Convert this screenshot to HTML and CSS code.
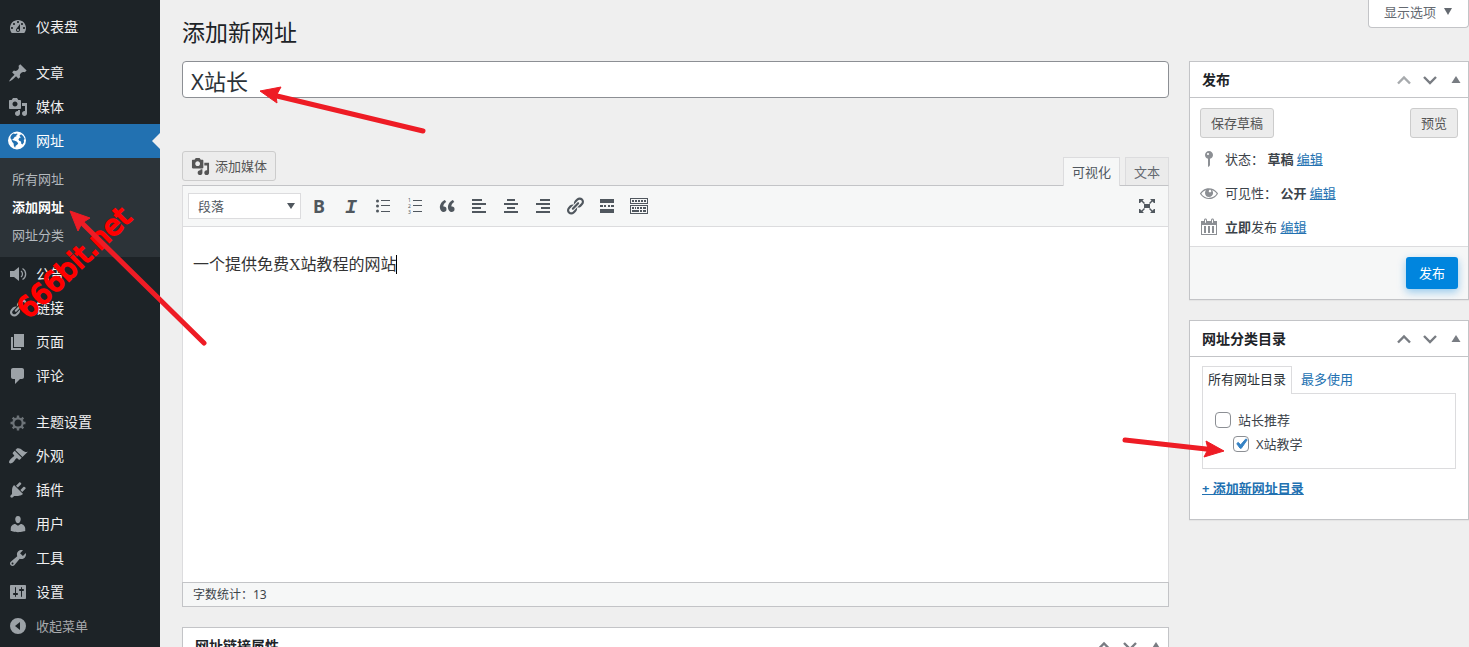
FILE: index.html
```html
<!DOCTYPE html>
<html lang="zh-CN">
<head>
    <meta charset="UTF-8">
    <meta name="viewport" content="width=device-width, initial-scale=1.0">
    <title>添加新网址</title>
    <link rel="stylesheet" href="styles.css">
</head>
<body>

    <!-- Shared icons -->
    <svg class="icon-defs" aria-hidden="true">
        <symbol id="i-media" viewBox="0 0 20 20"><path d="M13 11V4c0-.55-.45-1-1-1h-1.67L9 1H5L3.67 3H2c-.55 0-1 .45-1 1v7c0 .55.45 1 1 1h10c.55 0 1-.45 1-1zM7 4.5c1.38 0 2.5 1.12 2.5 2.5S8.38 9.5 7 9.5 4.5 8.38 4.5 7 5.62 4.5 7 4.5zM14 6h5v10.5c0 1.38-1.12 2.5-2.5 2.5S14 17.88 14 16.5s1.12-2.5 2.5-2.5c.17 0 .34.02.5.05V9h-3V6zm-4 8.05V13h2v3.5c0 1.38-1.12 2.5-2.5 2.5S7 17.88 7 16.5 8.12 14 9.5 14c.17 0 .34.02.5.05z"/></symbol>
        <symbol id="i-link" viewBox="0 0 20 20"><path d="M17.74 2.76c1.68 1.69 1.68 4.41 0 6.1l-1.53 1.52c-1.12 1.12-2.7 1.47-4.14 1.09l2.62-2.61.76-.77.76-.76c.84-.84.84-2.2 0-3.04-.84-.85-2.2-.85-3.04 0l-.77.76-3.38 3.38c-.37-1.44-.02-3.02 1.1-4.14l1.52-1.53c1.69-1.68 4.42-1.68 6.1 0zM8.59 13.43l5.34-5.34c.42-.42.42-1.1 0-1.52-.44-.43-1.13-.39-1.53 0l-5.33 5.34c-.42.42-.42 1.1 0 1.52.44.43 1.13.39 1.52 0zm-.76 2.29l4.14-4.15c.38 1.44.03 3.02-1.09 4.14l-1.52 1.53c-1.69 1.68-4.41 1.68-6.1 0-1.68-1.68-1.68-4.42 0-6.1l1.53-1.52c1.12-1.12 2.7-1.47 4.14-1.1l-4.14 4.15c-.85.84-.85 2.2 0 3.05.84.84 2.2.84 3.04 0z"/></symbol>
        <symbol id="i-up" viewBox="0 0 20 20"><path d="M4 13.500l6-6 6 6" fill="none" stroke="currentColor" stroke-width="2.400"/></symbol>
        <symbol id="i-down" viewBox="0 0 20 20"><path d="M4 7l6 6 6-6" fill="none" stroke="currentColor" stroke-width="2.400"/></symbol>
        <symbol id="i-toggle" viewBox="0 0 20 20"><path d="M5.500 13L10 6l4.500 7z"/></symbol>
    </svg>

    <div class="admin">
        <nav class="admin-menu">
            <a href="#" class="menu-item">
                <svg class="icon" viewBox="0 0 20 20"><path d="M3.76 16h12.48c1.1-1.37 1.76-3.11 1.76-5 0-4.42-3.58-8-8-8s-8 3.58-8 8c0 1.89.66 3.63 1.76 5zM10 4c.55 0 1 .45 1 1s-.45 1-1 1-1-.45-1-1 .45-1 1-1zM6 6c.55 0 1 .45 1 1s-.45 1-1 1-1-.45-1-1 .45-1 1-1zm8 0c.55 0 1 .45 1 1s-.45 1-1 1-1-.45-1-1 .45-1 1-1zm-5.37 5.55L12 7v6c0 1.1-.9 2-2 2s-2-.9-2-2c0-.57.24-1.08.63-1.45zM4 10c.55 0 1 .45 1 1s-.45 1-1 1-1-.45-1-1 .45-1 1-1zm12 0c.55 0 1 .45 1 1s-.45 1-1 1-1-.45-1-1 .45-1 1-1zm-5 3c0-.55-.45-1-1-1s-1 .45-1 1 .45 1 1 1 1-.45 1-1z"/></svg>
                仪表盘
            </a>
            <div class="menu-separator"></div>
            <a href="#" class="menu-item">
                <svg class="icon" viewBox="0 0 20 20"><path d="M10.44 3.02l1.82-1.82 6.36 6.35-1.83 1.82c-1.05-.68-2.48-.57-3.41.36l-.75.75c-.92.93-1.04 2.35-.35 3.41l-1.83 1.82-2.41-2.41-2.8 2.79c-.42.42-3.38 2.71-3.8 2.29s1.86-3.39 2.28-3.81l2.79-2.79L4.1 9.36l1.83-1.82c1.05.69 2.48.57 3.4-.36l.75-.75c.93-.92 1.05-2.35.36-3.41z"/></svg>
                文章
            </a>
            <a href="#" class="menu-item">
                <svg class="icon"><use href="#i-media"/></svg>
                媒体
            </a>
            <a href="#" class="menu-item current">
                <svg class="icon" viewBox="0 0 20 20"><path fill-rule="evenodd" d="M9 .500a9 9 0 1 0 0 18 9 9 0 0 0 0-18zM2.800 5c.7-1 1.600-1.800 2.600-2.400l1.800.4 1.400-.6 1.200.5-1.500 1.300.2 1-1.900.9-1.100 1.700-1.200.4.5 1.100 1.400.1 2.500 1.100 1.500 1.700-1 1.600-1.500 1-.6 2-1.200-1.900-.3-2.500-1.500-1.700-.7-2.200-1.100-1.400zM11.400 4.800l1.700-1.500 2.100 1.800 1.500 2.900-.9.9.2 2.300-1.500 2.400-1.200-.9-.3-2.200-1.800-.7-.8-1.600 1.200-1.500 1.300-.3z"/></svg>
                网址
            </a>
            <div class="submenu">
                <a href="#">所有网址</a>
                <a href="#" class="active">添加网址</a>
                <a href="#">网址分类</a>
            </div>
            <a href="#" class="menu-item">
                <svg class="icon" viewBox="0 0 20 20"><path d="M2 7h4l5-4v14l-5-4H2z"/><path d="M13 7c2 1.500 2 4.500 0 6M14.500 4.500c4.200 2.500 4.200 8.500 0 11" fill="none" stroke="currentColor" stroke-width="1.300"/></svg>
                公告
            </a>
            <a href="#" class="menu-item">
                <svg class="icon"><use href="#i-link"/></svg>
                链接
            </a>
            <a href="#" class="menu-item">
                <svg class="icon" viewBox="0 0 20 20"><path d="M6 15V2h10v13H6zm-1 1h8v2H3V5h2v11z"/></svg>
                页面
            </a>
            <a href="#" class="menu-item">
                <svg class="icon" viewBox="0 0 20 20"><path d="M5 2h9c1.100 0 2 .9 2 2v7c0 1.100-.9 2-2 2h-2l-5 5v-5H5c-1.100 0-2-.9-2-2V4c0-1.100.9-2 2-2z"/></svg>
                评论
            </a>
            <div class="menu-separator"></div>
            <a href="#" class="menu-item">
                <svg class="icon dim" viewBox="0 0 20 20" fill="none" stroke="currentColor"><circle cx="10" cy="11" r="4.700" stroke-width="2.200"/><path d="M10 3.500v2.500M10 16v2.500M2.500 11H5M15 11h2.500M4.700 5.700l1.800 1.800M13.500 14.500l1.800 1.800M4.700 16.300l1.800-1.800M13.500 7.500l1.800-1.800" stroke-width="2.400"/></svg>
                主题设置
            </a>
            <a href="#" class="menu-item">
                <svg class="icon" viewBox="0 0 20 20"><path d="M14.480 11.060L7.410 3.990l1.500-1.500c.5-.56 2.300-.47 3.510.32 1.210.8 1.430 1.280 2.910 2.100 1.180.64 2.450 1.260 4.450.85zm-.71.71L6.700 4.700 4.930 6.470c-.39.39-.39 1.020 0 1.410l1.060 1.060c.39.39.39 1.030 0 1.420-.6.6-1.430 1.110-2.210 1.690-.35.26-.7.53-1.010.84C1.430 14.230.4 16.080 1.400 17.070c.99 1 2.840-.03 4.180-1.360.31-.31.58-.66.85-1.020.57-.78 1.080-1.610 1.690-2.210.39-.39 1.020-.39 1.410 0l1.060 1.060c.39.39 1.020.39 1.410 0z"/></svg>
                外观
            </a>
            <a href="#" class="menu-item">
                <svg class="icon" viewBox="0 0 20 20"><path d="M13.110 4.360L9.870 7.600 8 5.730l3.240-3.240c.35-.34 1.050-.2 1.560.32.52.51.66 1.210.31 1.550zm-8 1.770l.91-1.120 9.010 9.010-1.190.84c-.71.71-2.630 1.160-3.820 1.160H6.140L4.900 17.260c-.59.59-1.540.59-2.120 0-.59-.58-.59-1.530 0-2.120l1.240-1.240v-3.880c0-1.130.4-3.190 1.090-3.890zm7.260 3.970l3.240-3.240c.34-.35 1.040-.21 1.550.31.52.51.66 1.210.31 1.550l-3.240 3.250z"/></svg>
                插件
            </a>
            <a href="#" class="menu-item">
                <svg class="icon" viewBox="0 0 20 20"><path d="M10 9.250c-2.270 0-2.730-3.440-2.730-3.440C7 4.020 7.820 2 9.970 2c2.160 0 2.980 2.020 2.710 3.810 0 0-.41 3.440-2.680 3.440zm0 2.570L12.720 10c2.390 0 4.520 2.330 4.520 4.530v2.490s-3.650 1.130-7.240 1.130c-3.650 0-7.240-1.130-7.240-1.130v-2.490c0-2.250 1.940-4.480 4.470-4.480z"/></svg>
                用户
            </a>
            <a href="#" class="menu-item">
                <svg class="icon" viewBox="0 0 20 20"><path d="M16.680 9.770c-1.340 1.340-3.300 1.670-4.950.99l-5.410 6.520c-.99.99-2.590.99-3.580 0s-.99-2.590 0-3.570l6.520-5.420c-.68-1.650-.35-3.610.99-4.950 1.280-1.280 3.120-1.620 4.720-1.060l-2.890 2.890 2.820 2.820 2.860-2.870c.53 1.580.18 3.390-1.080 4.650zM3.810 16.210c.4.39 1.040.39 1.430 0 .4-.4.4-1.040 0-1.430-.39-.4-1.030-.4-1.430 0-.39.39-.39 1.030 0 1.430z"/></svg>
                工具
            </a>
            <a href="#" class="menu-item">
                <svg class="icon" viewBox="0 0 20 20"><path d="M18 16V4c0-.55-.45-1-1-1H3c-.55 0-1 .45-1 1v12c0 .55.45 1 1 1h14c.55 0 1-.45 1-1zM8 11h1c.55 0 1 .45 1 1s-.45 1-1 1H8v1.500c0 .28-.22.5-.5.5s-.5-.22-.5-.5V13H6c-.55 0-1-.45-1-1s.45-1 1-1h1V5.500c0-.28.22-.5.5-.5s.5.22.5.5V11zm5-2h-1c-.55 0-1-.45-1-1s.45-1 1-1h1V5.500c0-.28.22-.5.5-.5s.5.22.5.5V7h1c.55 0 1 .45 1 1s-.45 1-1 1h-1v5.500c0 .28-.22.5-.5.5s-.5-.22-.5-.5V9z"/></svg>
                设置
            </a>
            <button type="button" class="menu-item collapse">
                <svg class="icon" viewBox="0 0 20 20"><path fill-rule="evenodd" d="M10 2a8 8 0 1 0 0 16 8 8 0 0 0 0-16zM12 6v8l-5-4z"/></svg>
                收起菜单
            </button>
        </nav>

        <main class="content">
            <button type="button" class="screen-options">显示选项 <span class="caret-down"></span></button>
            <h1>添加新网址</h1>

            <form class="columns">
                <div class="main-column">
                    <input type="text" class="title-input" aria-label="标题" value="X站长">

                    <div class="editor">
                        <div class="editor-tools">
                            <button type="button" class="button"><svg class="icon"><use href="#i-media"/></svg>添加媒体</button>
                            <div class="editor-tabs">
                                <button type="button" class="editor-tab active">可视化</button>
                                <button type="button" class="editor-tab">文本</button>
                            </div>
                        </div>
                        <div class="editor-box">
                            <div class="toolbar">
                                <div class="format">
                                    <select aria-label="段落格式">
                                        <option>段落</option>
                                    </select>
                                </div>
                                <button type="button" class="tool bold">B</button>
                                <button type="button" class="tool italic">I</button>
                                <button type="button" class="tool" aria-label="项目符号列表">
                                    <svg class="icon" viewBox="0 0 20 20"><circle cx="4.500" cy="5" r="1.500"/><circle cx="4.500" cy="10" r="1.500"/><circle cx="4.500" cy="15" r="1.500"/><path d="M8 4h9v1H8zM8 9h9v1H8zM8 15h9v1H8z"/></svg>
                                </button>
                                <button type="button" class="tool" aria-label="编号列表">
                                    <svg class="icon" viewBox="0 0 20 20"><text class="digit" x="3" y="6">1</text><text class="digit" x="3" y="12">2</text><text class="digit" x="3" y="18">3</text><path d="M8 4h9v1H8zM8 9h9v1H8zM8 15h9v1H8z"/></svg>
                                </button>
                                <button type="button" class="tool" aria-label="段落引用">
                                    <svg class="icon" viewBox="0 0 20 20"><path d="M9.490 13.220c0-.74-.2-1.380-.61-1.900-.62-.78-1.830-.88-2.530-.72-.29-1.650 1.110-3.750 2.920-4.650L7.880 4c-2.730 1.300-5.420 4.280-4.960 8.050C3.210 14.430 4.590 16 6.540 16c.85 0 1.560-.25 2.120-.75s.83-1.180.83-2.030zm8.050 0c0-.74-.2-1.380-.61-1.900-.63-.78-1.830-.88-2.530-.72-.29-1.650 1.110-3.750 2.920-4.650L15.930 4c-2.730 1.300-5.410 4.280-4.950 8.050.29 2.380 1.660 3.950 3.610 3.950.85 0 1.560-.25 2.120-.75s.83-1.180.83-2.030z"/></svg>
                                </button>
                                <button type="button" class="tool" aria-label="左对齐">
                                    <svg class="icon" viewBox="0 0 20 20"><path d="M3 3h10v2H3zM3 7h14v2H3zM3 11h9v2H3zM3 15h14v2H3z"/></svg>
                                </button>
                                <button type="button" class="tool" aria-label="居中对齐">
                                    <svg class="icon" viewBox="0 0 20 20"><path d="M6 3h8v2H6zM3 7h14v2H3zM6 11h8v2H6zM3 15h14v2H3z"/></svg>
                                </button>
                                <button type="button" class="tool" aria-label="右对齐">
                                    <svg class="icon" viewBox="0 0 20 20"><path d="M7 3h10v2H7zM3 7h14v2H3zM8 11h9v2H8zM3 15h14v2H3z"/></svg>
                                </button>
                                <button type="button" class="tool" aria-label="插入链接">
                                    <svg class="icon"><use href="#i-link"/></svg>
                                </button>
                                <button type="button" class="tool" aria-label="插入More标签">
                                    <svg class="icon" viewBox="0 0 20 20"><path d="M3 3h14v4H3zM3 9h3v2H3zM7 9h2v2H7zM11 9h2v2h-2zM14 9h3v2h-3zM3 13h14v4H3z"/></svg>
                                </button>
                                <button type="button" class="tool" aria-label="工具栏开关">
                                    <svg class="icon" viewBox="0 0 20 20"><path fill-rule="evenodd" d="M1 2h18v6H1zM2 3v4h16V3zM1 9h18v9H1zM2 10v7h16v-7z"/><path d="M3 4h2v2H3zM6 4h2v2H6zM9 4h2v2H9zM12 4h2v2h-2zM15 4h2v2h-2zM3 11h2v2H3zM6 11h1v2H6zM8 11h2v2H8zM11 11h2v2h-2zM14 11h3v2h-3zM3 14h7v2H3zM11 14h2v2h-2zM14 14h3v2h-3z"/></svg>
                                </button>
                                <button type="button" class="tool fullscreen" aria-label="全屏">
                                    <svg class="icon" viewBox="0 0 20 20"><path d="M7 8h6v4H7z"/><path d="M2 3h5L5.500 4.500l2.500 2.500-1 1-2.500-2.500L3 7H2zM18 3v4h-1l-1.500-1.500L13 8l-1-1 2.500-2.500L13 3zM2 17v-4h1l1.500 1.500L7 12l1 1-2.500 2.500L7 17zM18 17h-5l1.500-1.500L12 13l1-1 2.500 2.500L17 13h1z"/></svg>
                                </button>
                            </div>
                            <div class="editor-area">
                                <textarea aria-label="正文">一个提供免费X站教程的网站</textarea>
                                <span class="text-caret"></span>
                            </div>
                            <div class="statusbar">字数统计：13</div>
                        </div>
                    </div>

                    <section class="postbox">
                        <div class="postbox-header">
                            <h2>网址链接属性</h2>
                            <div class="handles">
                                <button type="button" aria-label="上移"><svg class="icon"><use href="#i-up"/></svg></button>
                                <button type="button" aria-label="下移"><svg class="icon"><use href="#i-down"/></svg></button>
                                <button type="button" aria-label="切换面板"><svg class="icon"><use href="#i-toggle"/></svg></button>
                            </div>
                        </div>
                    </section>
                </div>

                <aside class="side-column">
                    <section class="postbox">
                        <div class="postbox-header">
                            <h2>发布</h2>
                            <div class="handles">
                                <button type="button" aria-label="上移" disabled><svg class="icon"><use href="#i-up"/></svg></button>
                                <button type="button" aria-label="下移"><svg class="icon"><use href="#i-down"/></svg></button>
                                <button type="button" aria-label="切换面板"><svg class="icon"><use href="#i-toggle"/></svg></button>
                            </div>
                        </div>
                        <div class="publish-actions">
                            <button type="button" class="button">保存草稿</button>
                            <button type="button" class="button">预览</button>
                        </div>
                        <div class="publish-row">
                            <svg class="icon" viewBox="0 0 20 20"><path d="M14 6c0 1.860-1.280 3.410-3 3.860V16c0 1-2 2-2 2V9.860c-1.720-.45-3-2-3-3.860 0-2.210 1.790-4 4-4s4 1.790 4 4zM8 5c0 .55.45 1 1 1s1-.45 1-1-.45-1-1-1-1 .45-1 1z"/></svg>
                            <span>状态： <b>草稿</b> <a href="#">编辑</a></span>
                        </div>
                        <div class="publish-row">
                            <svg class="icon" viewBox="0 0 20 20"><path d="M18.300 9.500C15 4.900 8.500 3.800 3.900 7.200c-1.200.9-2.200 2.100-3 3.400.2.4.5.8.8 1.200 3.300 4.600 9.600 5.600 14.200 2.400.9-.7 1.700-1.400 2.400-2.400.3-.4.5-.8.8-1.200-.3-.4-.5-.8-.8-1.100zm-8.200-2.300c.5-.5 1.300-.5 1.800 0s.5 1.300 0 1.800-1.300.5-1.800 0-.5-1.300 0-1.800zm-.1 7.700c-3.100 0-6-1.600-7.700-4.200C3.500 9 5.100 7.800 7 7.200c-.7.8-1 1.700-1 2.700 0 2.200 1.700 4.100 4 4.100 2.200 0 4.100-1.700 4.100-4v-.1c0-1-.4-2-1.100-2.700 1.900.6 3.500 1.800 4.700 3.500-1.700 2.500-4.600 4.100-7.700 4.100z"/></svg>
                            <span>可见性： <b>公开</b> <a href="#">编辑</a></span>
                        </div>
                        <div class="publish-row">
                            <svg class="icon" viewBox="0 0 20 20"><path d="M15 4h3v14H2V4h3V3c0-.83.67-1.500 1.500-1.500S8 2.170 8 3v1h4V3c0-.83.67-1.500 1.500-1.500S15 2.170 15 3v1zM6 3v2.500c0 .28.22.5.5.5s.5-.22.5-.5V3c0-.28-.22-.5-.5-.5S6 2.720 6 3zm7 0v2.500c0 .28.22.5.5.5s.5-.22.5-.5V3c0-.28-.22-.5-.5-.5s-.5.22-.5.5zm4 14V8H3v9h14zM7 16V9H5v7h2zm4 0V9H9v7h2zm4 0V9h-2v7h2z"/></svg>
                            <span><b>立即</b>发布 <a href="#">编辑</a></span>
                        </div>
                        <div class="publish-footer">
                            <button type="button" class="button-primary">发布</button>
                        </div>
                    </section>

                    <section class="postbox">
                        <div class="postbox-header">
                            <h2>网址分类目录</h2>
                            <div class="handles">
                                <button type="button" aria-label="上移"><svg class="icon"><use href="#i-up"/></svg></button>
                                <button type="button" aria-label="下移"><svg class="icon"><use href="#i-down"/></svg></button>
                                <button type="button" aria-label="切换面板"><svg class="icon"><use href="#i-toggle"/></svg></button>
                            </div>
                        </div>
                        <div class="category">
                            <div class="category-tabs">
                                <a href="#" class="active">所有网址目录</a>
                                <a href="#">最多使用</a>
                            </div>
                            <div class="category-list">
                                <label><input type="checkbox">站长推荐</label>
                                <label class="child"><input type="checkbox" checked>X站教学</label>
                            </div>
                            <a href="#" class="category-add">+ 添加新网址目录</a>
                        </div>
                        <svg class="arrow arrow-category" viewBox="0 0 110 30" width="110" height="30">
                            <path d="M6 9L87 18" />
                            <polygon points="105,20 87,10 89,18 85,26" />
                        </svg>
                    </section>
                </aside>
            </form>
        </main>

        <!-- Annotations over the page -->
        <svg class="arrow arrow-title" viewBox="0 0 180 56" width="180" height="56">
            <path d="M170 45L24 10" />
            <polygon points="7,5 28,1 23,10 24,17" />
        </svg>
        <span class="watermark">666bit.net</span>
        <svg class="arrow arrow-menu" viewBox="0 0 150 146" width="150" height="146">
            <path d="M139 137L18 18" />
            <polygon points="5,5 25,12 17,17 13,25" />
        </svg>
    </div>

</body>
</html>
```

FILE: styles.css
```css
* {
    box-sizing: border-box;
}
body {
    margin: 0;
    background: #efefef;
    color: #3c434a;
    font-family: "Noto Sans", "Noto Sans CJK SC", sans-serif;
    font-size: 13px;
    line-height: 20px;
}
button, input, select, textarea {
    font: inherit;
    color: inherit;
    margin: 0;
}
button {
    cursor: pointer;
}
a {
    color: #2271b1;
}
.icon-defs {
    display: none;
}
.icon {
    width: 20px;
    height: 20px;
    fill: currentColor;
    flex: none;
}
.admin {
    position: relative;
    display: flex;
    min-height: 100vh;
    overflow: hidden;
}

/* Left menu */
.admin-menu {
    width: 160px;
    flex: none;
    padding-top: 10px;
    background: #1d2327;
}
.menu-item {
    display: flex;
    align-items: center;
    gap: 8px;
    height: 34px;
    padding: 0 8px;
    color: #f0f0f1;
    font-size: 14px;
    text-decoration: none;
}
.menu-item .icon {
    color: #9ca2a7;
}
.menu-item .icon.dim {
    color: #6d7378;
    fill: none;
}
.menu-item.current {
    position: relative;
    background: #2271b1;
    color: #fff;
}
.menu-item.current .icon {
    color: #fff;
}
.menu-item.current::after {
    content: "";
    position: absolute;
    right: 0;
    top: 9px;
    border: 8px solid transparent;
    border-left: 0;
    border-right-color: #efefef;
}
.menu-item.collapse {
    width: 100%;
    border: 0;
    background: none;
    color: #a7aaad;
    font-size: 13px;
}
.menu-separator {
    height: 12px;
}
.submenu {
    padding: 7px 0 8px;
    background: #2c3338;
}
.submenu a {
    display: block;
    padding: 4px 12px;
    color: #b4b9be;
    text-decoration: none;
}
.submenu a.active {
    color: #fff;
    font-weight: bold;
}

/* Content */
.content {
    position: relative;
    flex: 1;
    min-width: 0;
    padding: 14px 0 20px 22px;
}
h1 {
    margin: 0 0 11px;
    color: #1d2327;
    font-size: 23px;
    font-weight: 400;
    line-height: 36px;
}
.screen-options {
    position: absolute;
    top: 0;
    right: 0;
    display: flex;
    align-items: center;
    gap: 8px;
    height: 28px;
    padding: 0 16px 4px 15px;
    border: 1px solid #c3c4c7;
    border-top: 0;
    border-radius: 0 0 4px 4px;
    background: #fff;
    color: #646970;
}
.caret-down {
    border: 4px solid transparent;
    border-top: 7px solid #646970;
    border-bottom: 0;
}
.columns {
    display: flex;
    gap: 20px;
    align-items: flex-start;
}
.main-column {
    flex: 1;
    min-width: 0;
}
.side-column {
    width: 280px;
    flex: none;
}
.title-input {
    display: block;
    width: 100%;
    height: 37px;
    padding: 0 8px;
    border: 1px solid #8c8f94;
    border-radius: 4px;
    background: #fff;
    color: #2c3338;
    font-size: 22px;
}
.button {
    display: inline-flex;
    align-items: center;
    gap: 4px;
    height: 30px;
    padding: 0 10px;
    border: 1px solid #ccc;
    border-radius: 3px;
    background: #ececec;
    color: #555;
}

/* Editor */
.editor {
    margin: 53px 0 20px;
}
.editor-tools {
    display: flex;
    justify-content: space-between;
    height: 34px;
}
.editor-tools .button {
    padding: 0 8px;
}
.editor-tools .icon {
    width: 19px;
    height: 19px;
    margin-right: 1px;
}
.editor-tabs {
    display: flex;
    gap: 5px;
    align-items: flex-end;
}
.editor-tab {
    height: 28px;
    padding: 0 8px;
    border: 1px solid #dcdcde;
    border-bottom: 0;
    background: #ebebeb;
    color: #646970;
}
.editor-tab.active {
    height: 29px;
    margin-bottom: -1px;
    background: #f6f7f7;
    color: #50575e;
    z-index: 1;
}
.editor-box {
    border: 1px solid #dcdcde;
    border-top-color: #c3c4c7;
}
.toolbar {
    display: flex;
    align-items: center;
    gap: 4px;
    height: 41px;
    padding: 0 7px 0 5px;
    border-bottom: 1px solid #dcdcde;
    background: #f6f7f7;
    color: #50575e;
}
.format {
    position: relative;
}
.format::after {
    content: "";
    position: absolute;
    right: 6px;
    top: 10px;
    border: 4px solid transparent;
    border-top: 6px solid #50575e;
    border-bottom: 0;
}
.format select {
    display: block;
    width: 113px;
    height: 26px;
    padding: 0 9px;
    border: 1px solid #dcdcde;
    border-radius: 0;
    background: #fff;
    appearance: none;
}
.tool {
    display: flex;
    align-items: center;
    justify-content: center;
    width: 28px;
    height: 28px;
    padding: 0;
    border: 0;
    background: none;
}
.tool.bold {
    font-size: 18px;
    font-weight: bold;
}
.tool.italic {
    padding-top: 4px;
    font-family: "Liberation Mono", monospace;
    font-size: 20px;
    font-style: italic;
    font-weight: bold;
}
.tool.fullscreen {
    margin-left: auto;
}
.digit {
    font-size: 5px;
}
.editor-area {
    position: relative;
    background: #fff;
}
.editor-area textarea {
    display: block;
    width: 100%;
    height: 355px;
    padding: 25px 10px;
    border: 0;
    outline: 0;
    resize: none;
    background: none;
    color: #333;
    font-family: "Liberation Serif", "Noto Sans CJK SC", serif;
    font-size: 16px;
    line-height: 26px;
}
.text-caret {
    position: absolute;
    left: 213px;
    top: 28px;
    width: 1px;
    height: 19px;
    background: #000;
}
.statusbar {
    height: 25px;
    margin: 0 -1px -1px;
    padding: 0 10px;
    border: 1px solid #c3c4c7;
    background: #f6f7f7;
    font-size: 12px;
    line-height: 23px;
}

/* Boxes */
.postbox {
    position: relative;
    margin-bottom: 20px;
    border: 1px solid #c3c4c7;
    background: #fff;
    box-shadow: 0 1px 1px rgba(0, 0, 0, 0.04);
}
.postbox-header {
    display: flex;
    align-items: center;
    justify-content: space-between;
    height: 36px;
    padding: 0 2px 0 12px;
    border-bottom: 1px solid #c3c4c7;
}
.postbox-header h2 {
    margin: 0;
    color: #1d2327;
    font-size: 14px;
}
.handles {
    display: flex;
    color: #787c82;
}
.handles button {
    display: flex;
    align-items: center;
    justify-content: center;
    width: 26px;
    height: 34px;
    padding: 0;
    border: 0;
    background: none;
}
.handles button:disabled {
    color: #a7aaad;
}
.handles button:last-child {
    width: 20px;
    margin-left: 3px;
}
.publish-actions {
    display: flex;
    justify-content: space-between;
    padding: 10px 10px 4px;
}
.publish-row {
    display: flex;
    align-items: center;
    gap: 6px;
    height: 34px;
    padding: 0 9px;
}
.publish-row .icon {
    color: #8c8f94;
}
.publish-footer {
    display: flex;
    justify-content: flex-end;
    margin-top: 2px;
    padding: 10px;
    border-top: 1px solid #dcdcde;
    background: #f6f7f7;
}
.button-primary {
    height: 32px;
    padding: 0 13px;
    border: 0;
    border-radius: 3px;
    background: #0085de;
    color: #fff;
    box-shadow: 0 3px 8px rgba(0, 133, 222, 0.4);
}

/* Category box */
.category {
    padding: 9px 12px 21px;
}
.category-tabs {
    display: flex;
}
.category-tabs a {
    height: 27px;
    padding: 0 5px;
    border: 1px solid transparent;
    border-bottom: 0;
    line-height: 25px;
    text-decoration: none;
}
.category-tabs a + a {
    padding-left: 8px;
}
.category-tabs a.active {
    height: 28px;
    margin-bottom: -1px;
    border-color: #dcdcde;
    background: #fff;
    color: #2c3338;
    z-index: 1;
}
.category-list {
    height: 76px;
    margin-bottom: 9px;
    padding: 14px 12px;
    border: 1px solid #dcdcde;
}
.category-list label {
    display: flex;
    align-items: center;
    gap: 7px;
    height: 24px;
}
.category-list .child {
    margin-left: 18px;
}
.category-list input {
    width: 16px;
    height: 16px;
    border: 1px solid #8c8f94;
    border-radius: 4px;
    background: #fff;
    appearance: none;
}
.category-list input:checked {
    background: url("data:image/svg+xml,%3Csvg xmlns='http://www.w3.org/2000/svg' viewBox='0 0 20 20'%3E%3Cpath fill='%233582c4' stroke='%233582c4' d='M14.83 4.89l1.34.94-5.81 8.38H9.02L5.78 9.670l1.340-1.250 2.570 2.400z'/%3E%3C/svg%3E") center / 20px;
}
.category-add {
    font-weight: bold;
}

/* Annotations */
.arrow {
    position: absolute;
    fill: #ee1c25;
    stroke: #ee1c25;
    pointer-events: none;
}
.arrow path {
    stroke-width: 5px;
    stroke-linecap: round;
}
.arrow polygon {
    stroke-width: 1px;
}
.arrow-title {
    left: 253px;
    top: 86px;
}
.arrow-menu {
    left: 65px;
    top: 206px;
}
.arrow-category {
    left: -71px;
    top: 110px;
}
.watermark {
    position: absolute;
    left: 2px;
    top: 247px;
    color: #f00;
    font-family: "DejaVu Sans", sans-serif;
    font-size: 28px;
    line-height: 32px;
    -webkit-text-stroke: 2px #f00;
    transform: rotate(-44deg);
    pointer-events: none;
}
```
